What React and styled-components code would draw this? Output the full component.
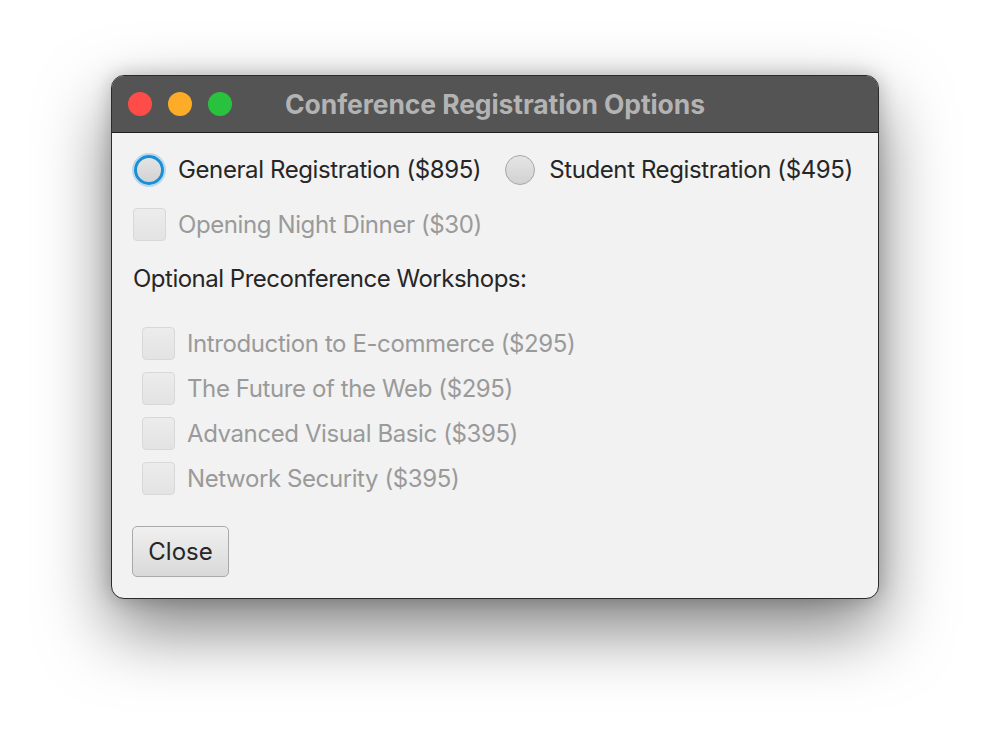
import React from 'react'
import styled, { createGlobalStyle } from 'styled-components'

const GlobalStyle = createGlobalStyle`
  html, body {
    margin: 0;
    padding: 0;
    background: #ffffff;
    font-family: Inter, "Liberation Sans", sans-serif;
  }
`

const Desk = styled.div`
  width: 990px;
  height: 746px;
  padding: 75px 0 0 111px;
  box-sizing: border-box;
`

const Window = styled.div`
  width: 768px;
  height: 524px;
  box-sizing: border-box;
  border: 1px solid #2b2b2b;
  border-radius: 13px;
  overflow: hidden;
  background: #f2f2f2;
  display: flex;
  flex-direction: column;
  box-shadow: 0 30px 70px rgba(0, 0, 0, 0.5), 0 0 20px rgba(0, 0, 0, 0.22);
`

const TitleBar = styled.div`
  height: 56px;
  flex-shrink: 0;
  background: #545454;
  border-bottom: 1px solid #1f1f1f;
  display: flex;
  align-items: center;
  padding-left: 16px;
  position: relative;
`

const Lights = styled.div`
  display: flex;
  gap: 16px;
`

const Light = styled.span`
  width: 24px;
  height: 24px;
  border-radius: 50%;
  background: ${p => p.color};
`

const Title = styled.div`
  position: absolute;
  left: 0;
  right: 0;
  top: 13px;
  text-align: center;
  font-size: 26.5px;
  line-height: 30px;
  font-weight: 700;
  color: #b3b3b3;
  pointer-events: none;
  letter-spacing: -0.1px;
`

const Body = styled.div`
  padding: 18px 20px 20px 20px;
  display: flex;
  flex-direction: column;
`

const RadioRow = styled.div`
  display: flex;
  align-items: center;
  gap: 22px;
  height: 38px;
`

const Option = styled.label`
  display: flex;
  align-items: center;
  gap: 12px;
  font-size: 24px;
  line-height: 30px;
  white-space: nowrap;
  color: ${p => (p.disabled ? '#9a9a9a' : '#262626')};
  letter-spacing: -0.4px;
`

const Radio = styled.span`
  width: 30px;
  height: 30px;
  box-sizing: border-box;
  border-radius: 50%;
  border: ${p => (p.focused ? '3px solid #1a8fd6' : '1.5px solid #a6a6a6')};
  background: linear-gradient(#e4e4e4, #d2d2d2);
  box-shadow: ${p => (p.focused ? '0 0 0 2px rgba(80, 170, 230, 0.35)' : 'none')};
  margin: 2px;
`

const Check = styled.span`
  width: 33px;
  height: 33px;
  flex-shrink: 0;
  box-sizing: border-box;
  border-radius: 4px;
  border: 1.5px solid #d8d8d8;
  background: linear-gradient(#ececec, #e3e3e3);
`

const DinnerRow = styled.div`
  margin-top: 19px;
  margin-left: 1px;
`

const Heading = styled.div`
  margin-top: 23px;
  margin-left: 1px;
  font-size: 24px;
  line-height: 30px;
  color: #262626;
  letter-spacing: -0.5px;
`

const Workshops = styled.div`
  margin-top: 33px;
  margin-left: 10px;
  display: flex;
  flex-direction: column;
  gap: 12px;
`

const Button = styled.button`
  margin-top: 31px;
  align-self: flex-start;
  width: 97px;
  height: 51px;
  border: 1.5px solid #a9a9a9;
  border-radius: 5px;
  background: linear-gradient(#f0f0f0, #d9d9d9);
  font-family: inherit;
  font-size: 24px;
  color: #262626;
  padding: 0;
`

const workshops = [
  'Introduction to E-commerce ($295)',
  'The Future of the Web ($295)',
  'Advanced Visual Basic ($395)',
  'Network Security ($395)',
]

export default function App() {
  return (
    <>
      <GlobalStyle />
      <Desk>
        <Window>
          <TitleBar>
            <Lights>
              <Light color="#fe4d48" />
              <Light color="#fdac28" />
              <Light color="#29c23f" />
            </Lights>
            <Title>Conference Registration Options</Title>
          </TitleBar>
          <Body>
            <RadioRow>
              <Option>
                <Radio focused />
                General Registration ($895)
              </Option>
              <Option>
                <Radio />
                Student Registration ($495)
              </Option>
            </RadioRow>
            <DinnerRow>
              <Option disabled>
                <Check />
                Opening Night Dinner ($30)
              </Option>
            </DinnerRow>
            <Heading>Optional Preconference Workshops:</Heading>
            <Workshops>
              {workshops.map(w => (
                <Option disabled key={w}>
                  <Check />
                  {w}
                </Option>
              ))}
            </Workshops>
            <Button>Close</Button>
          </Body>
        </Window>
      </Desk>
    </>
  )
}
